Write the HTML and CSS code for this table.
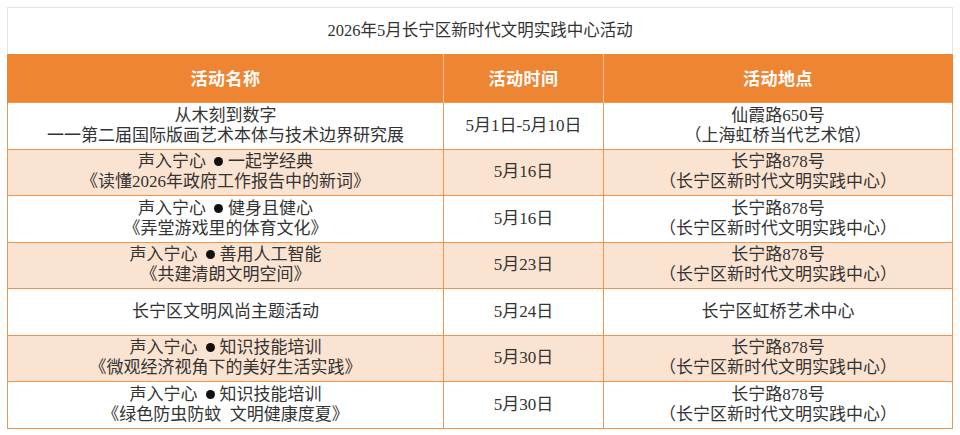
FILE: index.html
```html
<!DOCTYPE html>
<html lang="zh-CN">
<head>
<meta charset="utf-8">
<title>2026年5月长宁区新时代文明实践中心活动</title>
<link rel="stylesheet" href="styles.css">
</head>
<body>
<table class="schedule">
  <colgroup>
    <col class="col-name">
    <col class="col-time">
    <col class="col-place">
  </colgroup>
  <thead>
    <tr class="title-row"><th colspan="3" class="title">2026年5月长宁区新时代文明实践中心活动</th></tr>
    <tr class="head-row">
      <th>活动名称</th>
      <th>活动时间</th>
      <th>活动地点</th>
    </tr>
  </thead>
  <tbody>
    <tr>
      <td>从木刻到数字<br>一一第二届国际版画艺术本体与技术边界研究展</td>
      <td>5月1日-5月10日</td>
      <td>仙霞路650号<br>（上海虹桥当代艺术馆）</td>
    </tr>
    <tr class="alt">
      <td>声入宁心<span class="dot" aria-label="●"></span>一起学经典<br>《读懂2026年政府工作报告中的新词》</td>
      <td>5月16日</td>
      <td>长宁路878号<br>（长宁区新时代文明实践中心）</td>
    </tr>
    <tr>
      <td>声入宁心<span class="dot" aria-label="●"></span>健身且健心<br>《弄堂游戏里的体育文化》</td>
      <td>5月16日</td>
      <td>长宁路878号<br>（长宁区新时代文明实践中心）</td>
    </tr>
    <tr class="alt">
      <td>声入宁心<span class="dot" aria-label="●"></span>善用人工智能<br>《共建清朗文明空间》</td>
      <td>5月23日</td>
      <td>长宁路878号<br>（长宁区新时代文明实践中心）</td>
    </tr>
    <tr>
      <td>长宁区文明风尚主题活动</td>
      <td>5月24日</td>
      <td>长宁区虹桥艺术中心</td>
    </tr>
    <tr class="alt">
      <td>声入宁心<span class="dot" aria-label="●"></span>知识技能培训<br>《微观经济视角下的美好生活实践》</td>
      <td>5月30日</td>
      <td>长宁路878号<br>（长宁区新时代文明实践中心）</td>
    </tr>
    <tr>
      <td>声入宁心<span class="dot" aria-label="●"></span>知识技能培训<br>《绿色防虫防蚊&nbsp;&nbsp;文明健康度夏》</td>
      <td>5月30日</td>
      <td>长宁路878号<br>（长宁区新时代文明实践中心）</td>
    </tr>
  </tbody>
</table>
</body>
</html>
```
FILE: styles.css
```css
html, body {
  margin: 0;
  padding: 0;
  background: #ffffff;
}
body {
  padding: 7px 0 0 7px;
  font-family: "Liberation Serif", "Noto Sans CJK SC", sans-serif;
  color: #333333;
}
.schedule {
  width: 945px;
  border-collapse: collapse;
  table-layout: fixed;
  font-size: 17px;
  line-height: 20px;
}
.col-name { width: 436px; }
.col-time { width: 160px; }
.col-place { width: 349px; }

.title {
  height: 46px;
  padding: 0;
  font-weight: normal;
  font-size: 16.5px;
  color: #333333;
  border: 1px solid #e4e4e4;
  border-bottom: none;
  background: #ffffff;
  text-align: center;
  vertical-align: middle;
}
.head-row th {
  height: 48px;
  padding: 0;
  background: #ed8532;
  color: #ffffff;
  font-family: "Noto Sans CJK SC", sans-serif;
  font-weight: bold;
  font-size: 17px;
  letter-spacing: 0.5px;
  border-left: 1px solid #f6c49c;
  border-right: 1px solid #f6c49c;
  text-align: center;
  vertical-align: middle;
}
.head-row th:first-child { border-left-color: #ed8532; }
.head-row th:last-child { border-right-color: #ed8532; }

.schedule tbody td {
  height: 45.5px;
  padding: 0;
  border: 1px solid #f1954c;
  text-align: center;
  vertical-align: middle;
  background: #ffffff;
}
.schedule tbody tr.alt td {
  background: #fbe3d1;
}
.dot {
  display: inline-block;
  width: 9px;
  height: 9px;
  border-radius: 50%;
  background: #111111;
  margin: 0 5px 0 8px;
  vertical-align: 1px;
}
```
